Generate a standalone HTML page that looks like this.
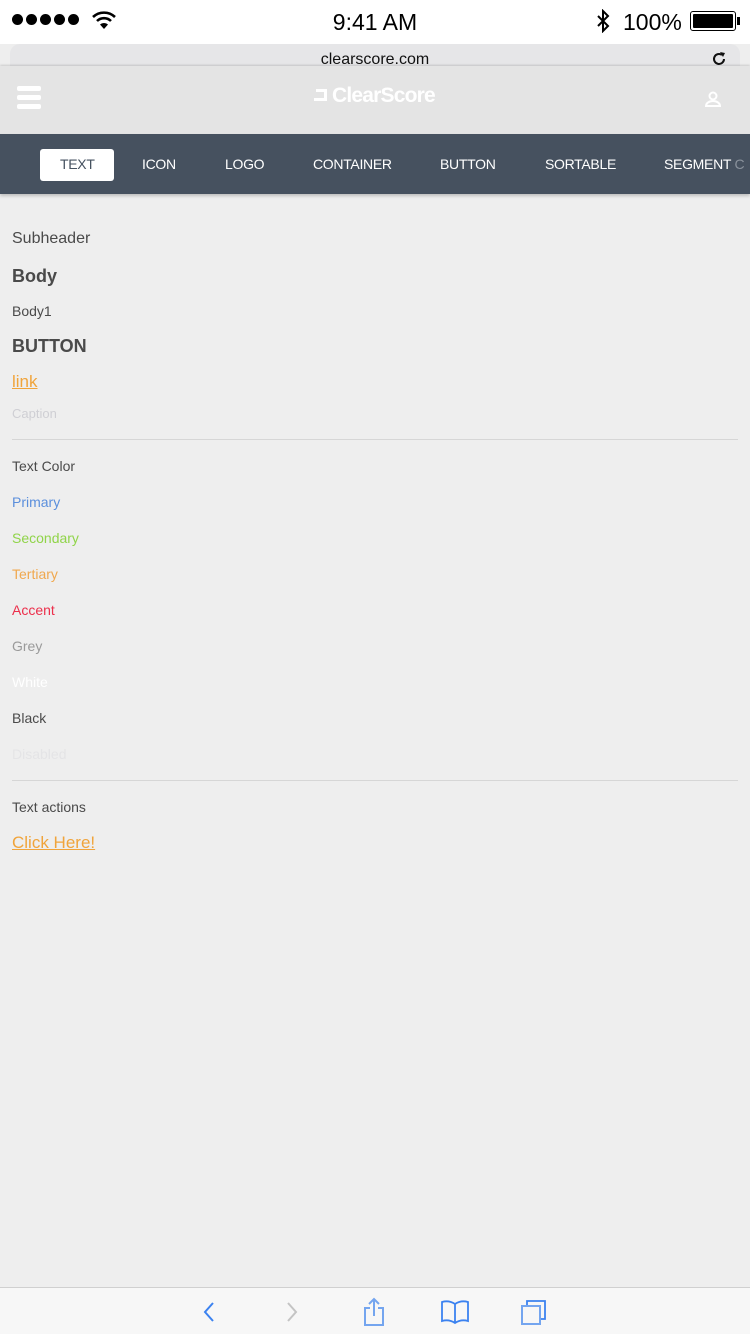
<!DOCTYPE html>
<html><head><meta charset="utf-8"><style>
*{margin:0;padding:0;box-sizing:border-box}
body{width:750px;height:1334px;background:#eeeeee;font-family:"Liberation Sans",Arial,sans-serif;position:relative;overflow:hidden;color:#4a4a4a}
.a{position:absolute;left:12px;line-height:20px;white-space:nowrap}
.status{position:absolute;top:0;left:0;width:750px;height:44px;background:#fff}
.url{position:absolute;top:44px;left:10px;width:730px;height:40px;background:#e6e6e8;border-radius:10px}
.hdr{position:absolute;top:66px;left:0;width:750px;height:68px;background:#e4e4e4;box-shadow:0 -1px 2px rgba(0,0,0,.15)}
.nav{position:absolute;top:134px;left:0;width:750px;height:60px;background:#46515f;box-shadow:0 2px 3px rgba(0,0,0,.2)}
.nav span{position:absolute;top:22px;color:#fff;font-size:14px;line-height:16px;letter-spacing:-0.3px}
.hr{position:absolute;left:12px;width:726px;height:1px;background:#d6d6d6}
.bar{position:absolute;top:1287px;left:0;width:750px;height:47px;background:#f7f7f7;border-top:1px solid #d0d0d0}
</style></head><body>
<div class="status">
 <div style="position:absolute;left:12px;top:14px;display:flex;gap:3px">
  <i style="width:11px;height:11px;border-radius:50%;background:#000;display:block"></i><i style="width:11px;height:11px;border-radius:50%;background:#000;display:block"></i><i style="width:11px;height:11px;border-radius:50%;background:#000;display:block"></i><i style="width:11px;height:11px;border-radius:50%;background:#000;display:block"></i><i style="width:11px;height:11px;border-radius:50%;background:#000;display:block"></i>
 </div>
 <svg style="position:absolute;left:91px;top:10px" width="26" height="20" viewBox="0 0 26 20"><path d="M2 7 A16 16 0 0 1 24 7" stroke="#000" stroke-width="2.6" fill="none"/><path d="M6 11 A10 10 0 0 1 20 11" stroke="#000" stroke-width="2.6" fill="none"/><path d="M13 19 L9 14.5 A6 6 0 0 1 17 14.5 Z" fill="#000"/></svg>
 <div style="position:absolute;left:0;width:750px;top:9px;text-align:center;font-size:23px;color:#000">9:41 AM</div>
 <svg style="position:absolute;left:595px;top:9px" width="16" height="24" viewBox="0 0 16 24"><path d="M3 7 L13 17 L8 22 L8 2 L13 7 L3 17" stroke="#000" stroke-width="2" fill="none"/></svg>
 <div style="position:absolute;left:623px;top:9px;font-size:23px;color:#000">100%</div>
 <div style="position:absolute;left:690px;top:11px;width:46px;height:20px;border:1.5px solid #000;border-radius:3px;padding:2px"><div style="background:#000;width:100%;height:100%;border-radius:1px"></div></div>
 <div style="position:absolute;left:737px;top:17px;width:3px;height:8px;background:#000"></div>
</div>
<div class="url"><div style="position:absolute;top:7px;width:730px;text-align:center;font-size:16px;color:#111">clearscore.com</div>
<svg style="position:absolute;left:700px;top:6px" width="18" height="18" viewBox="0 0 18 18"><path d="M14 9 A5 5 0 1 1 12 5" stroke="#111" stroke-width="2" fill="none"/><path d="M10 2 L15 3 L13 7 Z" fill="#111"/></svg></div>
<div class="hdr">
 <div style="position:absolute;left:17px;top:20px;width:24px">
  <div style="height:5px;background:#fff;border-radius:2px;margin-bottom:4px"></div><div style="height:5px;background:#fff;border-radius:2px;margin-bottom:4px"></div><div style="height:5px;background:#fff;border-radius:2px"></div></div>
 <div style="position:absolute;left:316px;top:23px;width:11px;height:12px;border:3px solid #fff;border-left:none"></div>
 <div style="position:absolute;left:314px;top:32px;width:3px;height:3px;background:#fff"></div>
 <div style="position:absolute;left:332px;top:18px;font-size:21px;font-weight:bold;color:#fff;letter-spacing:-0.8px">ClearScore</div>
 <svg style="position:absolute;left:704px;top:24px" width="18" height="18" viewBox="0 0 18 18"><circle cx="9" cy="6" r="3.5" stroke="#fff" stroke-width="2" fill="none"/><path d="M2 16 A7 5 0 0 1 16 16 Z" stroke="#fff" stroke-width="2" fill="none"/></svg>
</div>
<div class="nav">
 <div style="position:absolute;left:40px;top:15px;width:74px;height:32px;background:#fff;border-radius:3px"></div>
 <span style="left:60px;color:#465260">TEXT</span>
 <span style="left:142px">ICON</span>
 <span style="left:225px">LOGO</span>
 <span style="left:313px">CONTAINER</span>
 <span style="left:440px">BUTTON</span>
 <span style="left:545px">SORTABLE</span>
 <span style="left:664px">SEGMENT <span style="position:static;color:#8a929c">C</span></span>
</div>
<div class="a" style="top:229px;font-size:16px">Subheader</div>
<div class="a" style="top:266px;font-size:18px;font-weight:bold">Body</div>
<div class="a" style="top:301px;font-size:14px">Body1</div>
<div class="a" style="top:336px;font-size:18px;font-weight:bold">BUTTON</div>
<div class="a" style="top:372px;font-size:17px;color:#f0a43b;text-decoration:underline">link</div>
<div class="a" style="top:404px;font-size:13px;color:#cfcfd4">Caption</div>
<div class="hr" style="top:439px"></div>
<div class="a" style="top:456px;font-size:14px">Text Color</div>
<div class="a" style="top:492px;font-size:14px;color:#5b8fdc">Primary</div>
<div class="a" style="top:528px;font-size:14px;color:#90d449">Secondary</div>
<div class="a" style="top:564px;font-size:14px;color:#f0a84e">Tertiary</div>
<div class="a" style="top:600px;font-size:14px;color:#ec2f4b">Accent</div>
<div class="a" style="top:636px;font-size:14px;color:#9a9a9a">Grey</div>
<div class="a" style="top:672px;font-size:14px;color:#fff">White</div>
<div class="a" style="top:708px;font-size:14px">Black</div>
<div class="a" style="top:744px;font-size:14px;color:#e4e4e6">Disabled</div>
<div class="hr" style="top:780px"></div>
<div class="a" style="top:797px;font-size:14px">Text actions</div>
<div class="a" style="top:833px;font-size:17px;color:#f0a43b;text-decoration:underline">Click Here!</div>
<div class="bar">
 <svg style="position:absolute;left:202px;top:13px" width="14" height="22" viewBox="0 0 14 22"><path d="M11 2 L3 11 L11 20" stroke="#3b82f0" stroke-width="2" fill="none"/></svg>
 <svg style="position:absolute;left:285px;top:13px" width="14" height="22" viewBox="0 0 14 22"><path d="M3 2 L11 11 L3 20" stroke="#c4c4c4" stroke-width="2" fill="none"/></svg>
 <svg style="position:absolute;left:362px;top:9px" width="24" height="30" viewBox="0 0 24 30"><path d="M8 11 H3 V28 H21 V11 H16" stroke="#74a5ef" stroke-width="2" fill="none"/><path d="M12 19 V2 M7 7 L12 2 L17 7" stroke="#74a5ef" stroke-width="2" fill="none"/></svg>
 <svg style="position:absolute;left:440px;top:11px" width="30" height="26" viewBox="0 0 30 26"><path d="M15 5 Q9 1 2 3 V22 Q9 20 15 24 Q21 20 28 22 V3 Q21 1 15 5 V24" stroke="#3b82f0" stroke-width="1.8" fill="none"/></svg>
 <svg style="position:absolute;left:520px;top:11px" width="28" height="28" viewBox="0 0 28 28"><path d="M7 6 V2 H25 V20 H21" stroke="#3b82f0" stroke-width="1.8" fill="none"/><rect x="2" y="7" width="18" height="18" stroke="#74a5ef" stroke-width="2" fill="none"/></svg>
</div>
</body></html>
